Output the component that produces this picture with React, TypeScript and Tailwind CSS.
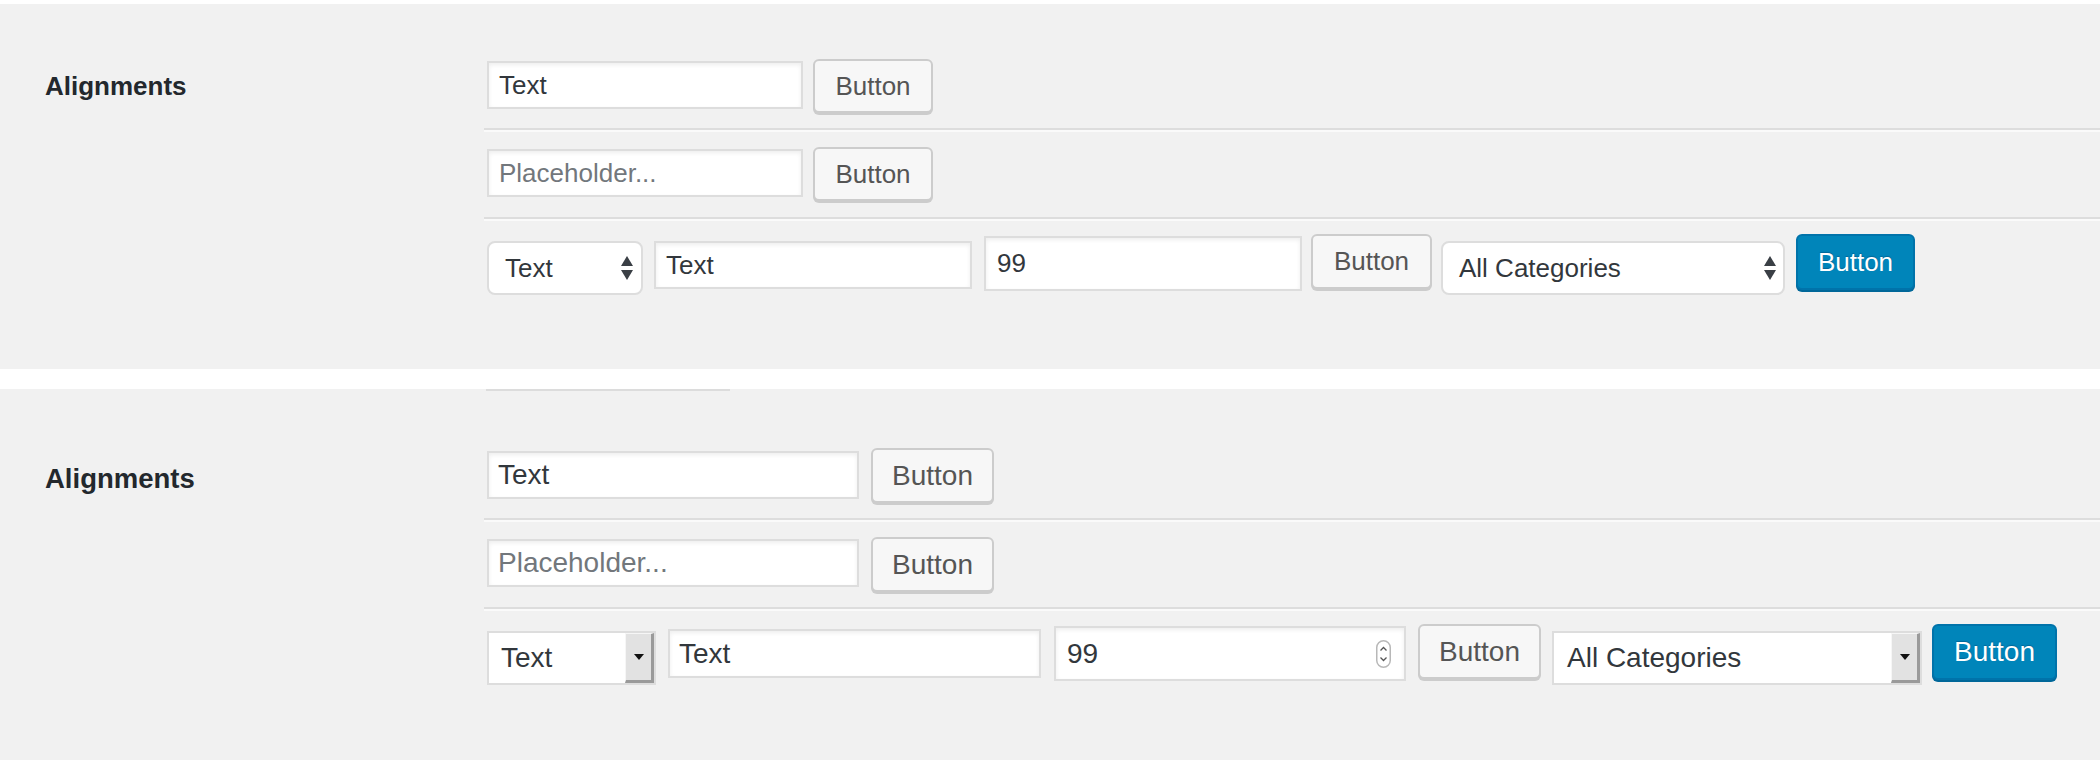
const field =
  "flex items-center shrink-0 bg-white border-2 border-[#ddd] shadow-[inset_0_2px_4px_rgba(0,0,0,0.07)] text-[#32373c]";
const btn =
  "flex items-center justify-center shrink-0 rounded-[6px] border-2 border-[#ccc] bg-[#f7f7f7] text-[#555] shadow-[0_2px_0_#ccc]";
const primary =
  "flex items-center justify-center shrink-0 rounded-[6px] border-2 border-[#0073aa] bg-[#0085ba] text-white shadow-[0_2px_0_#006799] [text-shadow:0_-1px_1px_#006799]";
const rule = "border-t-2 border-b-2 border-t-[#ddd] border-b-[#fafafa]";

function UpDown() {
  return (
    <svg width="12" height="24" viewBox="0 0 12 24" className="shrink-0">
      <polygon points="6,0 12,10 0,10" fill="#3a3f45" />
      <polygon points="0,14 12,14 6,24" fill="#3a3f45" />
    </svg>
  );
}

function ClassicArrow() {
  return (
    <div className="flex items-center justify-center self-stretch w-[29px] shrink-0 bg-[#e2e2e2] border-l border-t border-l-[#f6f6f6] border-t-[#f6f6f6] border-r-[3px] border-b-[3px] border-r-[#9a9a9a] border-b-[#9a9a9a]">
      <svg width="10" height="6" viewBox="0 0 10 6">
        <polygon points="0,0 10,0 5,6" fill="#111" />
      </svg>
    </div>
  );
}

function Spinner() {
  return (
    <svg width="15" height="28" viewBox="0 0 15 28" className="shrink-0">
      <rect x="0.75" y="0.75" width="13.5" height="26.5" rx="6.75" fill="#fff" stroke="#b8b8b8" strokeWidth="1.5" />
      <path d="M4.5 10.5 L7.5 7.5 L10.5 10.5" stroke="#555" strokeWidth="1.3" fill="none" />
      <path d="M4.5 17.5 L7.5 20.5 L10.5 17.5" stroke="#555" strokeWidth="1.3" fill="none" />
    </svg>
  );
}

export default function App() {
  return (
    <div className="min-h-[760px] w-[2100px] bg-white pt-[4px] font-['Liberation_Sans',Arial,sans-serif]">
      {/* First block: modern controls */}
      <section className="flex h-[365px] bg-[#f1f1f1] text-[26px]">
        <div className="w-[484px] shrink-0 pl-[45px] pt-[67px]">
          <h2 className="text-[26px] leading-[30px] font-bold text-[#23282d]">Alignments</h2>
        </div>
        <div className="flex-1 pt-[55px]">
          <div className="flex items-start pl-[3px]">
            <div className={`${field} mt-[2px] h-[48px] w-[316px] pl-[10px]`}>Text</div>
            <div className={`${btn} ml-[10px] h-[54px] w-[120px]`}>Button</div>
          </div>
          <div className={`${rule} mt-[15px]`} />
          <div className="mt-[15px] flex items-start pl-[3px]">
            <input
              className={`${field} mt-[2px] h-[48px] w-[316px] pl-[10px] outline-none placeholder:text-[#72777c]`}
              placeholder="Placeholder..."
              readOnly
            />
            <div className={`${btn} ml-[10px] h-[54px] w-[120px]`}>Button</div>
          </div>
          <div className={`${rule} mt-[16px]`} />
          <div className="mt-[13px] flex items-start pl-[3px]">
            <div className="mt-[7px] flex h-[54px] w-[156px] shrink-0 items-center justify-between rounded-[8px] border-2 border-[#ddd] bg-white pl-[16px] pr-[8px] text-[#32373c]">
              <span>Text</span>
              <UpDown />
            </div>
            <div className={`${field} ml-[11px] mt-[7px] h-[48px] w-[318px] pl-[10px]`}>Text</div>
            <div className={`${field} ml-[12px] mt-[2px] h-[55px] w-[318px] pl-[11px]`}>99</div>
            <div className={`${btn} ml-[9px] h-[55px] w-[121px]`}>Button</div>
            <div className="ml-[9px] mt-[7px] flex h-[54px] w-[344px] shrink-0 items-center justify-between rounded-[8px] border-2 border-[#ddd] bg-white pl-[16px] pr-[7px] text-[#32373c]">
              <span>All Categories</span>
              <UpDown />
            </div>
            <div className={`${primary} ml-[11px] h-[56px] w-[119px]`}>Button</div>
          </div>
        </div>
      </section>

      <div className="h-[20px]" />

      {/* Second block: classic controls */}
      <section className="h-[371px] bg-[#f1f1f1] text-[28px]">
        <div className="ml-[486px] h-[2px] w-[244px] bg-[#dcdcdc]" />
        <div className="flex">
          <div className="w-[484px] shrink-0 pl-[45px] pt-[72px]">
            <h2 className="text-[27.5px] leading-[32px] font-bold text-[#23282d]">Alignments</h2>
          </div>
          <div className="flex-1 pt-[57px]">
            <div className="flex items-start pl-[3px]">
              <div className={`${field} mt-[3px] h-[48px] w-[372px] pl-[9px]`}>Text</div>
              <div className={`${btn} ml-[12px] h-[55px] w-[123px]`}>Button</div>
            </div>
            <div className={`${rule} mt-[15px]`} />
            <div className="mt-[15px] flex items-start pl-[3px]">
              <input
                className={`${field} mt-[2px] h-[48px] w-[372px] pl-[9px] outline-none placeholder:text-[#72777c]`}
                placeholder="Placeholder..."
                readOnly
              />
              <div className={`${btn} ml-[12px] h-[55px] w-[123px]`}>Button</div>
            </div>
            <div className={`${rule} mt-[15px]`} />
            <div className="mt-[13px] flex items-start pl-[3px]">
              <div className="mt-[7px] flex h-[54px] w-[169px] shrink-0 items-center border-2 border-[#ddd] bg-white text-[#32373c]">
                <span className="flex-1 pl-[12px]">Text</span>
                <ClassicArrow />
              </div>
              <div className={`${field} ml-[12px] mt-[5px] h-[49px] w-[373px] pl-[9px]`}>Text</div>
              <div className={`${field} ml-[13px] mt-[2px] h-[55px] w-[352px] justify-between pl-[11px] pr-[13px]`}>
                <span>99</span>
                <Spinner />
              </div>
              <div className={`${btn} ml-[12px] h-[55px] w-[123px]`}>Button</div>
              <div className="ml-[11px] mt-[7px] flex h-[54px] w-[370px] shrink-0 items-center border-2 border-[#ddd] bg-white text-[#32373c]">
                <span className="flex-1 pl-[13px]">All Categories</span>
                <ClassicArrow />
              </div>
              <div className={`${primary} ml-[10px] h-[56px] w-[125px]`}>Button</div>
            </div>
          </div>
        </div>
      </section>
    </div>
  );
}
